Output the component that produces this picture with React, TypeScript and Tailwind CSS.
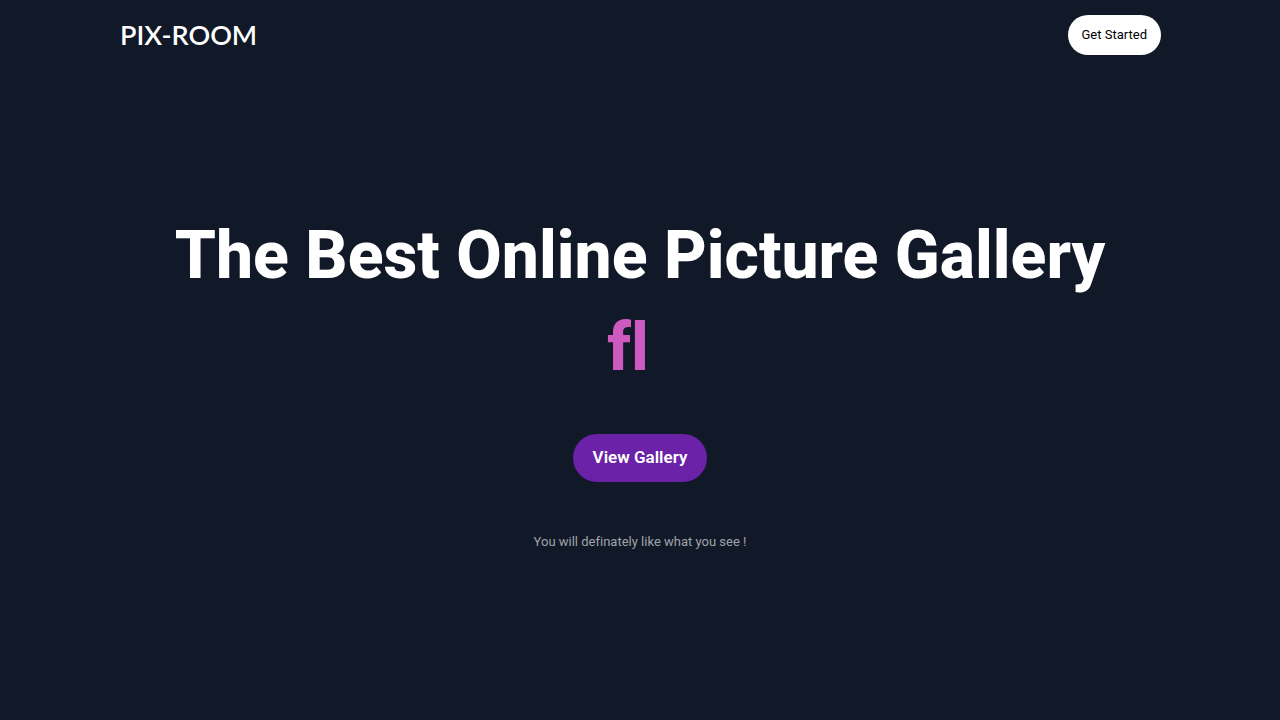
export default function App() {
  return (
    <div className="min-h-screen bg-[#111827] font-['Roboto',sans-serif] text-white [font-variant-ligatures:none]">
      <header className="mx-auto flex max-w-[1042px] items-center justify-between pt-[15px]">
        <a href="#home" className="font-['Lato',sans-serif] pl-px text-[27px] leading-10 font-semibold">
          PIX-ROOM
        </a>
        <button type="button" className="h-10 rounded-[20px] bg-white px-[14px] text-[13px] text-black">
          Get Started
        </button>
      </header>
      <main className="flex flex-col items-center pt-[155px] text-center">
        <h1 className="text-[66px] leading-[92px] font-extrabold">
          The Best Online Picture Gallery
          <span className="block pr-6 text-[#cd5abe]">fl</span>
        </h1>
        <button type="button" className="mt-10 h-12 rounded-3xl bg-[#6b21a8] px-5 text-[17px] font-semibold">
          View Gallery
        </button>
        <p className="mt-12 text-[13px] leading-6 text-[#a0a3aa]">You will definately like what you see !</p>
      </main>
    </div>
  );
}
